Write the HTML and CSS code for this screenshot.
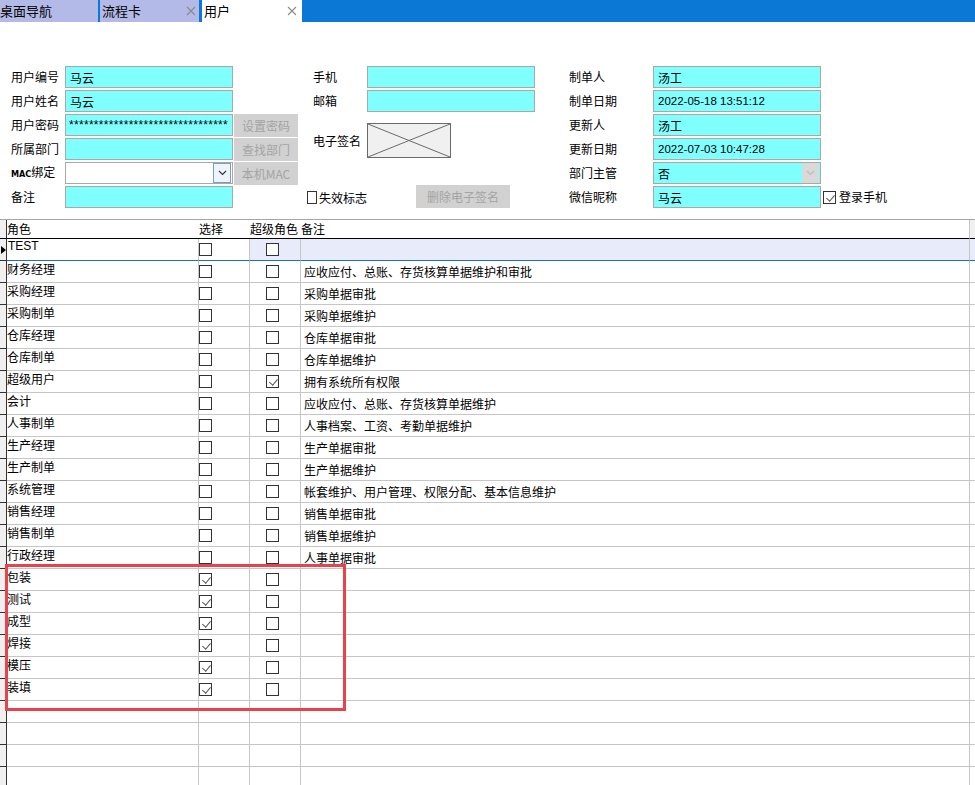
FILE: index.html
```html
<!DOCTYPE html>
<html lang="zh-CN">
<head>
  <meta charset="UTF-8">
  <title>用户</title>
  <link rel="stylesheet" href="styles.css">
</head>
<body>

<div class="tabbar">
  <div class="tab tab-nav">桌面导航</div>
  <div class="tab tab-flow">流程卡<svg class="tab-x" width="10" height="10" viewBox="0 0 10 10"><path d="M1 1L9 9M9 1L1 9" stroke="#8a8a8a" stroke-width="1.1"/></svg></div>
  <div class="tab tab-active">用户<svg class="tab-x" width="10" height="10" viewBox="0 0 10 10"><path d="M1 1L9 9M9 1L1 9" stroke="#8a8a8a" stroke-width="1.1"/></svg></div>
</div>

<div class="form">
  <div class="block block-left">
    <span class="lbl">用户编号</span><input class="fld" value="马云" readonly>
    <span class="lbl">用户姓名</span><input class="fld" value="马云" readonly>
    <span class="lbl">用户密码</span><input class="fld pwd" value="********************************" readonly><button class="btn">设置密码</button>
    <span class="lbl">所属部门</span><input class="fld" readonly><button class="btn">查找部门</button>
    <span class="lbl"><span class="mac">MAC</span>绑定</span>
    <div class="fld sel sel-white"><span></span><span class="arrow"><svg width="9" height="6" viewBox="0 0 9 6"><path d="M1 1L4.5 4.5L8 1" fill="none" stroke="#333" stroke-width="1.1"/></svg></span></div>
    <button class="btn">本机MAC</button>
    <span class="lbl">备注</span><input class="fld" readonly>
  </div>

  <div class="block block-mid">
    <span class="lbl">手机</span><input class="fld" readonly>
    <span class="lbl">邮箱</span><input class="fld" readonly>
    <span class="lbl sig-lbl">电子签名</span>
    <div class="sig"><svg width="82" height="33" viewBox="0 0 82 33"><path d="M0 0L82 33M82 0L0 33" stroke="#6a6a6a" stroke-width="1"/></svg></div>
    <label class="chk-lbl lost"><span class="chk"></span>失效标志</label>
    <button class="btn btn-del">删除电子签名</button>
  </div>

  <div class="block block-right">
    <span class="lbl">制单人</span><input class="fld" value="汤工" readonly>
    <span class="lbl">制单日期</span><input class="fld num" value="2022-05-18 13:51:12" readonly>
    <span class="lbl">更新人</span><input class="fld" value="汤工" readonly>
    <span class="lbl">更新日期</span><input class="fld num" value="2022-07-03 10:47:28" readonly>
    <span class="lbl">部门主管</span>
    <div class="fld sel"><span>否</span><span class="arrow arrow-off"><svg width="9" height="6" viewBox="0 0 9 6"><path d="M1 1L4.5 4.5L8 1" fill="none" stroke="#bdbdbd" stroke-width="1.1"/></svg></span></div>
    <span class="lbl">微信昵称</span><input class="fld" value="马云" readonly>
    <label class="chk-lbl login"><span class="chk on"></span>登录手机</label>
  </div>
</div>

<div class="grid">
  <div class="row head"><div class="rh"></div><div class="c-name">角色</div><div class="c-sel">选择</div><div class="c-sup">超级角色</div><div class="c-note">备注</div><div class="c-fill"></div></div>
  <div class="row cur"><div class="rh"><span class="ptr"></span></div><div class="c-name">TEST</div><div class="c-sel"><span class="chk"></span></div><div class="c-sup"><span class="chk"></span></div><div class="c-note"></div><div class="c-fill"></div></div>
  <div class="row"><div class="rh"></div><div class="c-name">财务经理</div><div class="c-sel"><span class="chk"></span></div><div class="c-sup"><span class="chk"></span></div><div class="c-note">应收应付、总账、存货核算单据维护和审批</div><div class="c-fill"></div></div>
  <div class="row"><div class="rh"></div><div class="c-name">采购经理</div><div class="c-sel"><span class="chk"></span></div><div class="c-sup"><span class="chk"></span></div><div class="c-note">采购单据审批</div><div class="c-fill"></div></div>
  <div class="row"><div class="rh"></div><div class="c-name">采购制单</div><div class="c-sel"><span class="chk"></span></div><div class="c-sup"><span class="chk"></span></div><div class="c-note">采购单据维护</div><div class="c-fill"></div></div>
  <div class="row"><div class="rh"></div><div class="c-name">仓库经理</div><div class="c-sel"><span class="chk"></span></div><div class="c-sup"><span class="chk"></span></div><div class="c-note">仓库单据审批</div><div class="c-fill"></div></div>
  <div class="row"><div class="rh"></div><div class="c-name">仓库制单</div><div class="c-sel"><span class="chk"></span></div><div class="c-sup"><span class="chk"></span></div><div class="c-note">仓库单据维护</div><div class="c-fill"></div></div>
  <div class="row"><div class="rh"></div><div class="c-name">超级用户</div><div class="c-sel"><span class="chk"></span></div><div class="c-sup"><span class="chk on"></span></div><div class="c-note">拥有系统所有权限</div><div class="c-fill"></div></div>
  <div class="row"><div class="rh"></div><div class="c-name">会计</div><div class="c-sel"><span class="chk"></span></div><div class="c-sup"><span class="chk"></span></div><div class="c-note">应收应付、总账、存货核算单据维护</div><div class="c-fill"></div></div>
  <div class="row"><div class="rh"></div><div class="c-name">人事制单</div><div class="c-sel"><span class="chk"></span></div><div class="c-sup"><span class="chk"></span></div><div class="c-note">人事档案、工资、考勤单据维护</div><div class="c-fill"></div></div>
  <div class="row"><div class="rh"></div><div class="c-name">生产经理</div><div class="c-sel"><span class="chk"></span></div><div class="c-sup"><span class="chk"></span></div><div class="c-note">生产单据审批</div><div class="c-fill"></div></div>
  <div class="row"><div class="rh"></div><div class="c-name">生产制单</div><div class="c-sel"><span class="chk"></span></div><div class="c-sup"><span class="chk"></span></div><div class="c-note">生产单据维护</div><div class="c-fill"></div></div>
  <div class="row"><div class="rh"></div><div class="c-name">系统管理</div><div class="c-sel"><span class="chk"></span></div><div class="c-sup"><span class="chk"></span></div><div class="c-note">帐套维护、用户管理、权限分配、基本信息维护</div><div class="c-fill"></div></div>
  <div class="row"><div class="rh"></div><div class="c-name">销售经理</div><div class="c-sel"><span class="chk"></span></div><div class="c-sup"><span class="chk"></span></div><div class="c-note">销售单据审批</div><div class="c-fill"></div></div>
  <div class="row"><div class="rh"></div><div class="c-name">销售制单</div><div class="c-sel"><span class="chk"></span></div><div class="c-sup"><span class="chk"></span></div><div class="c-note">销售单据维护</div><div class="c-fill"></div></div>
  <div class="row"><div class="rh"></div><div class="c-name">行政经理</div><div class="c-sel"><span class="chk"></span></div><div class="c-sup"><span class="chk"></span></div><div class="c-note">人事单据审批</div><div class="c-fill"></div></div>
  <div class="row"><div class="rh"></div><div class="c-name">包装</div><div class="c-sel"><span class="chk on"></span></div><div class="c-sup"><span class="chk"></span></div><div class="c-note"></div><div class="c-fill"></div></div>
  <div class="row"><div class="rh"></div><div class="c-name">测试</div><div class="c-sel"><span class="chk on"></span></div><div class="c-sup"><span class="chk"></span></div><div class="c-note"></div><div class="c-fill"></div></div>
  <div class="row"><div class="rh"></div><div class="c-name">成型</div><div class="c-sel"><span class="chk on"></span></div><div class="c-sup"><span class="chk"></span></div><div class="c-note"></div><div class="c-fill"></div></div>
  <div class="row"><div class="rh"></div><div class="c-name">焊接</div><div class="c-sel"><span class="chk on"></span></div><div class="c-sup"><span class="chk"></span></div><div class="c-note"></div><div class="c-fill"></div></div>
  <div class="row"><div class="rh"></div><div class="c-name">模压</div><div class="c-sel"><span class="chk on"></span></div><div class="c-sup"><span class="chk"></span></div><div class="c-note"></div><div class="c-fill"></div></div>
  <div class="row"><div class="rh"></div><div class="c-name">装填</div><div class="c-sel"><span class="chk on"></span></div><div class="c-sup"><span class="chk"></span></div><div class="c-note"></div><div class="c-fill"></div></div>
  <div class="row"><div class="rh"></div><div class="c-name"></div><div class="c-sel"></div><div class="c-sup"></div><div class="c-note"></div><div class="c-fill"></div></div>
  <div class="row"><div class="rh"></div><div class="c-name"></div><div class="c-sel"></div><div class="c-sup"></div><div class="c-note"></div><div class="c-fill"></div></div>
  <div class="row"><div class="rh"></div><div class="c-name"></div><div class="c-sel"></div><div class="c-sup"></div><div class="c-note"></div><div class="c-fill"></div></div>
  <div class="row"><div class="rh"></div><div class="c-name"></div><div class="c-sel"></div><div class="c-sup"></div><div class="c-note"></div><div class="c-fill"></div></div>
</div>

<div class="mark"></div>

</body>
</html>
```

FILE: styles.css
```css
* {
  box-sizing: border-box;
}
body {
  margin: 0;
  width: 975px;
  height: 785px;
  overflow: hidden;
  position: relative;
  background: #fff;
  color: #000;
  font-family: "Noto Sans CJK SC", "Noto Sans", sans-serif;
  font-size: 12px;
}

/* tabs */
.tabbar {
  height: 22px;
  background: #0a78d4;
  display: flex;
}
.tab {
  height: 22px;
  background: #b3bae8;
  display: flex;
  align-items: center;
  justify-content: space-between;
  padding: 0 3px 0 2px;
  line-height: 22px;
  font-size: 13px;
}
.tab-nav {
  width: 98px;
  padding-left: 0;
  margin-right: 2px;
}
.tab-flow {
  width: 99px;
  margin-right: 3px;
}
.tab-active {
  width: 100px;
  background: #fff;
  padding-right: 5px;
}
.tab-x {
  display: block;
}

/* form */
.form {
  display: flex;
  padding: 44px 0 0 11px;
}
.block {
  display: grid;
  grid-auto-rows: 22px;
  row-gap: 2px;
  align-items: center;
}
.block-left {
  grid-template-columns: 54px 168px 65px;
}
.block-mid {
  grid-template-columns: 60px 168px;
  grid-template-rows: repeat(6, 22px);
  margin-left: 9px;
}
.block-right {
  grid-template-columns: 84px 168px auto;
  margin-left: 34px;
}
.lbl {
  grid-column: 1;
  line-height: 22px;
  white-space: nowrap;
}
.mac {
  font-family: "DejaVu Sans Condensed", "Liberation Sans", sans-serif;
  font-size: 9px;
  font-weight: bold;
}
.block-mid .lbl {
  padding-left: 6px;
}
.fld {
  grid-column: 2;
  height: 22px;
  width: 168px;
  margin: 0;
  border: 1px solid #a8a8a8;
  background: #80ffff;
  padding: 0 4px;
  font-family: "Noto Sans CJK SC", sans-serif;
  font-size: 12px;
  color: #000;
  outline: none;
}
.fld.num {
  font-family: "Liberation Sans", sans-serif;
  font-size: 11.5px;
}
.fld.pwd {
  font-family: "Liberation Sans", sans-serif;
  font-size: 12px;
  letter-spacing: 0.3px;
  padding-left: 3px;
}
.sel {
  display: flex;
  align-items: center;
  justify-content: space-between;
  padding-right: 1px;
}
.sel-white {
  background: #fff;
}
.arrow {
  width: 18px;
  height: 20px;
  display: flex;
  align-items: center;
  justify-content: center;
  border: 1px solid #7c9ac8;
  background: #eef4fb;
}
.arrow-off {
  border: none;
  background: #d9d9d9;
  width: 17px;
}
.btn {
  grid-column: 3;
  margin: 0 0 0 1px;
  width: 64px;
  height: 23px;
  border: none;
  background: #d1d1d1;
  color: #a3a3a3;
  font-family: "Noto Sans CJK SC", sans-serif;
  font-size: 12px;
  padding: 0;
}
.sig-lbl {
  grid-row: 3 / 5;
  align-self: start;
  margin-top: 16px;
}
.sig {
  grid-column: 2;
  grid-row: 3 / 5;
  align-self: start;
  margin-top: 9px;
  width: 84px;
  height: 35px;
  border: 1px solid #6a6a6a;
  background: #f0f0f0;
}
.sig svg {
  display: block;
}
.chk-lbl {
  display: flex;
  align-items: center;
  gap: 2px;
  white-space: nowrap;
  line-height: 22px;
}
.block-mid .lost {
  grid-column: 1;
  grid-row: 6;
  margin-top: 1px;
}
.btn-del {
  grid-column: 2;
  grid-row: 6;
  width: 94px;
  margin: -2px 0 0 49px;
}
.login {
  grid-column: 3;
  margin-left: 2px;
  gap: 3px;
}
.chk {
  display: inline-block;
  position: relative;
  width: 13px;
  height: 13px;
  border: 1px solid #333;
  background: #fff;
}
.chk.on::after {
  content: "";
  position: absolute;
  left: 3.5px;
  top: 1px;
  width: 3.5px;
  height: 7px;
  border-right: 1.3px solid #555;
  border-bottom: 1.3px solid #555;
  transform: rotate(40deg);
}

/* role grid */
.grid {
  margin-top: 11px;
}
.row {
  display: grid;
  grid-template-columns: 7px 192px 51px 51px 669px 5px;
  height: 22px;
}
.row > div {
  border-bottom: 1px solid #c6c6c6;
}
.row .rh {
  background: #f0f0f0;
  border-right: 1px solid #333;
  border-bottom-color: #333;
  position: relative;
}
.c-name,
.c-sel,
.c-sup,
.c-note {
  border-right: 1px solid #c6c6c6;
}
.c-name {
  line-height: 15px;
  white-space: nowrap;
}
.c-sel .chk {
  margin: 4px 0 0 0;
}
.c-sup .chk {
  margin: 4px 0 0 16px;
}
.c-note {
  padding-left: 3px;
  line-height: 21px;
  white-space: nowrap;
}
.row.head {
  height: 20px;
  border-top: 1px solid #a6a6a6;
}
.row.head > div {
  border-bottom: 1px solid #000;
  border-right: none;
  line-height: 18px;
}
.row.head .rh {
  border-right: 1px solid #333;
}
.row.head .c-note {
  border-right: 1px solid #c6c6c6;
  padding-left: 0;
}
.row.head .c-fill {
  background: #f0f0f0;
}
.row.cur > div {
  border-bottom-color: #1f6fbf;
  background: #e8ebfa;
}
.row.cur .rh {
  background: #f0f0f0;
  border-bottom-color: #333;
}
.row.cur .c-name {
  background: #fff;
  font-family: "Liberation Sans", sans-serif;
  padding-left: 1px;
}
.row.cur .c-sel {
  background: #fff;
}
.ptr {
  position: absolute;
  left: 1px;
  top: 7px;
  border-left: 5px solid #000;
  border-top: 4px solid transparent;
  border-bottom: 4px solid transparent;
}

/* annotation */
.mark {
  position: absolute;
  left: 5px;
  top: 564px;
  width: 341px;
  height: 147px;
  border: 3px solid #e8434d;
}
```
